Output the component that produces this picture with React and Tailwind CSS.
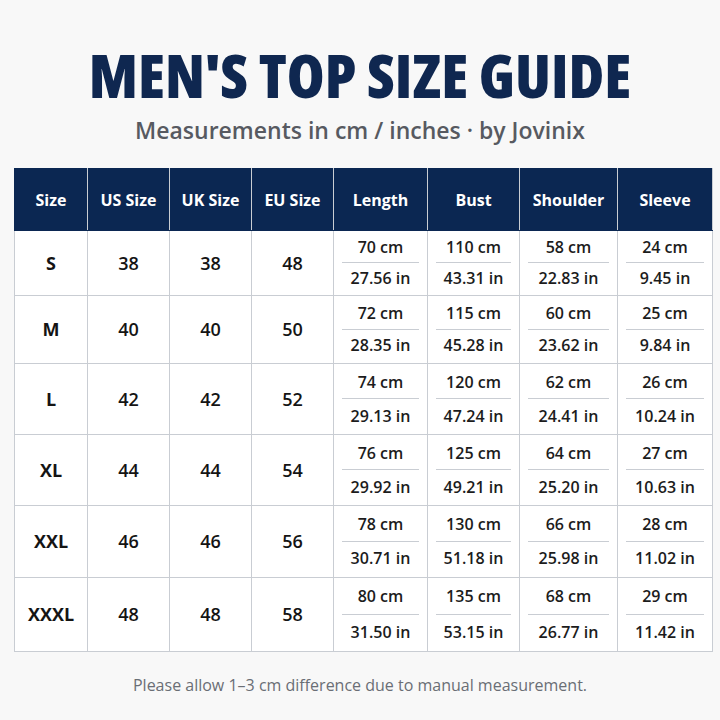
const rows = [
  { size: "S", us: "38", uk: "38", eu: "48", h: "h-[65px]", m: [["70 cm", "27.56 in"], ["110 cm", "43.31 in"], ["58 cm", "22.83 in"], ["24 cm", "9.45 in"]] },
  { size: "M", us: "40", uk: "40", eu: "50", h: "h-[68px]", m: [["72 cm", "28.35 in"], ["115 cm", "45.28 in"], ["60 cm", "23.62 in"], ["25 cm", "9.84 in"]] },
  { size: "L", us: "42", uk: "42", eu: "52", h: "h-[71px]", m: [["74 cm", "29.13 in"], ["120 cm", "47.24 in"], ["62 cm", "24.41 in"], ["26 cm", "10.24 in"]] },
  { size: "XL", us: "44", uk: "44", eu: "54", h: "h-[71px]", m: [["76 cm", "29.92 in"], ["125 cm", "49.21 in"], ["64 cm", "25.20 in"], ["27 cm", "10.63 in"]] },
  { size: "XXL", us: "46", uk: "46", eu: "56", h: "h-[72px]", m: [["78 cm", "30.71 in"], ["130 cm", "51.18 in"], ["66 cm", "25.98 in"], ["28 cm", "11.02 in"]] },
  { size: "XXXL", us: "48", uk: "48", eu: "58", h: "h-[74px]", m: [["80 cm", "31.50 in"], ["135 cm", "53.15 in"], ["68 cm", "26.77 in"], ["29 cm", "11.42 in"]] },
];

const headers = ["Size", "US Size", "UK Size", "EU Size", "Length", "Bust", "Shoulder", "Sleeve"];
const widths = ["w-[73px]", "w-[82px]", "w-[82px]", "w-[82px]", "w-[94px]", "w-[92px]", "w-[98px]", "w-[95px]"];

export default function App() {
  return (
    <div className="w-[720px] h-[720px] bg-[#f8f8f8] font-['Open_Sans',sans-serif] overflow-hidden">
      <div className="pt-[44px] text-center text-[61px] leading-[62px] font-extrabold text-[#0f2750] font-stretch-[75%]">
        MEN'S TOP SIZE GUIDE
      </div>
      <div className="mt-[8px] text-center text-[23px] leading-[32px] font-semibold text-[#575a61] font-stretch-[88%]">
        Measurements in cm / inches · by Jovinix
      </div>
      <table className="mt-[22px] ml-[14px] w-[698px] border-collapse table-fixed bg-white text-[#141414] font-stretch-[88%]">
        <colgroup>
          {widths.map((w, i) => (
            <col key={i} className={w} />
          ))}
        </colgroup>
        <thead>
          <tr className="h-[62px] bg-[#0b2752]">
            {headers.map((h) => (
              <th key={h} className="border border-[#0b2752] border-r-[#c9cdd3] text-white text-[16px] font-bold text-center">
                {h}
              </th>
            ))}
          </tr>
        </thead>
        <tbody>
          {rows.map((r) => (
            <tr key={r.size} className={r.h}>
              <td className="border border-[#c9cdd3] text-center text-[18px] font-bold">{r.size}</td>
              <td className="border border-[#c9cdd3] text-center text-[18px] font-semibold">{r.us}</td>
              <td className="border border-[#c9cdd3] text-center text-[18px] font-semibold">{r.uk}</td>
              <td className="border border-[#c9cdd3] text-center text-[18px] font-semibold">{r.eu}</td>
              {r.m.map(([cm, inch], i) => (
                <td key={i} className="border border-[#c9cdd3] p-0 h-[inherit] text-[16px] font-semibold text-[#1c1c1c]">
                  <div className="flex flex-col h-full">
                    <div className="flex-1 flex items-center justify-center pt-[1px]">{cm}</div>
                    <div className="mx-[8px] h-px bg-[#c9cdd3]" />
                    <div className="flex-1 flex items-center justify-center pb-[2px]">{inch}</div>
                  </div>
                </td>
              ))}
            </tr>
          ))}
        </tbody>
      </table>
      <div className="mt-[21px] text-center text-[16px] leading-[24px] font-normal text-[#6a6e75]">
        Please allow 1–3 cm difference due to manual measurement.
      </div>
    </div>
  );
}
